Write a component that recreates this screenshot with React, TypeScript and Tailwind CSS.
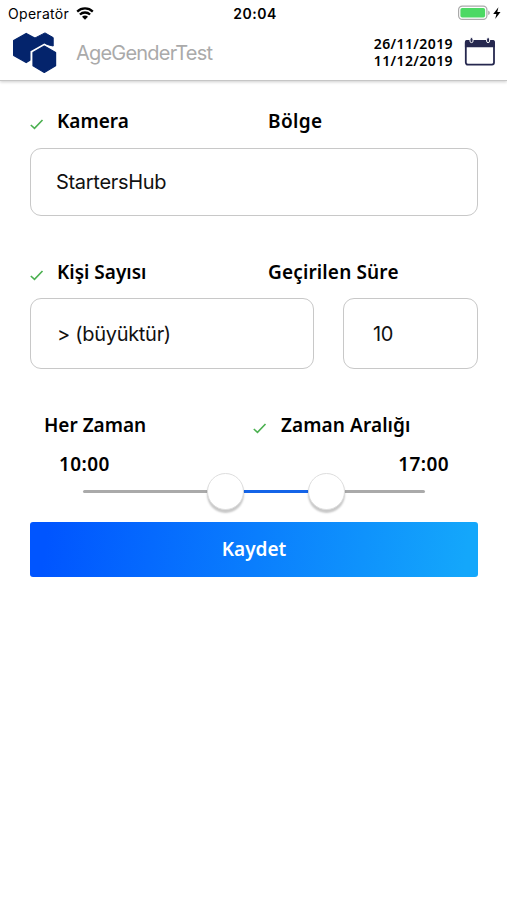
import type { ReactNode } from "react";
import clsx from "clsx";

const labelFont = "font-['Noto_Sans',sans-serif] font-semibold whitespace-nowrap text-black";

function StatusBar() {
  return (
    <div className="flex h-[27px] items-center pl-[8px] pr-[5px] text-black">
      <div className="flex flex-1 items-center">
        <span className="text-[14px] leading-[27px] tracking-[0.3px]">Operatör</span>
        <svg className="ml-[7px]" width="18" height="13" viewBox="0 0 18 13">
          <g fill="none" stroke="black" strokeWidth="2.3">
            <path d="M1.2 4.6C5.6 .4 12.4 .4 16.8 4.6" />
            <path d="M3.9 7.5C6.8 4.8 11.2 4.8 14.1 7.5" />
          </g>
          <path d="M6 9.7C7.7 8.2 10.3 8.2 12 9.7L9 12.7Z" />
        </svg>
      </div>
      <span className="text-[14px] font-semibold leading-[27px] tracking-[0.5px]">20:04</span>
      <div className="flex flex-1 items-center justify-end">
        <svg className="-mt-px" width="44" height="16" viewBox="0 0 44 16">
          <rect x=".6" y="1.1" width="28.3" height="13.3" rx="3.6" fill="white" stroke="#aaa" strokeWidth="1.2" />
          <rect x="2.4" y="2.9" width="24.7" height="9.7" rx="1.8" fill="#4cd964" />
          <path d="M30.3 5.4c1.9.8 1.9 3.9 0 4.7Z" fill="#999" />
          <path d="M40.4 2.2 35.2 8.9h3.2l-1.2 5 5.3-6.8h-3.2Z" />
        </svg>
      </div>
    </div>
  );
}

function Logo() {
  return (
    <svg className="-mt-px" width="46" height="42" viewBox="0 0 46 42" fill="#04246c">
      <path d="M33 .9 41.2 5.6V14L32.5 12 28 17 20 10V7.5Z" stroke="#04246c" strokeWidth="1" strokeLinejoin="round" />
      <path d="M14.2 1.5 26.4 8.2V22.8L14.2 30.5 1.7 23.3V8.5Z" stroke="#04246c" strokeWidth="1.4" strokeLinejoin="round" />
      <path
        d="M32.3 12.7 45 19.8V34.2L32.3 41.7 19.6 34.2V19.8Z"
        fill="white"
        stroke="white"
        strokeWidth="2.2"
      />
      <path d="M32.3 14 43.6 20.5V33.7L32.3 40.4 21 33.7V20.5Z" stroke="#04246c" strokeWidth="1.2" strokeLinejoin="round" />
    </svg>
  );
}

function CalendarIcon() {
  return (
    <svg className="-mt-[3px]" width="32" height="30" viewBox="0 0 32 30">
      <rect x="1.8" y="3.8" width="28.2" height="23.8" rx="2" fill="white" stroke="#26284f" strokeWidth="1.8" />
      <path d="M.9 10.2V4.9Q.9 2.9 2.9 2.9H28.9Q30.9 2.9 30.9 4.9V10.2Z" fill="#26284f" />
      <g fill="#26284f" stroke="white" strokeWidth="1">
        <rect x="6" y=".6" width="3" height="5" rx="1.5" />
        <rect x="22.6" y=".6" width="3" height="5" rx="1.5" />
      </g>
    </svg>
  );
}

function Check({ className }: { className?: string }) {
  return (
    <svg className={className} width="14" height="11" viewBox="0 0 14 11">
      <path d="M.8 6 4.5 9.3 12.5 1" fill="none" stroke="#4bb050" strokeWidth="1.6" />
    </svg>
  );
}

function Field({ className, children }: { className?: string; children: ReactNode }) {
  return (
    <div
      className={clsx(
        "flex items-center rounded-[11px] border border-[#c8c8c8] text-[20px] tracking-[-0.3px] text-[#111]",
        className,
      )}
    >
      {children}
    </div>
  );
}

function Thumb({ className }: { className: string }) {
  return (
    <div
      className={clsx(
        "absolute top-[-0.5px] size-[37px] rounded-full border border-[#dedede] bg-white shadow-[0_3px_2px_rgba(0,0,0,0.22)]",
        className,
      )}
    />
  );
}

export default function App() {
  return (
    <div className="min-h-screen overflow-hidden bg-white font-['Inter',sans-serif]">
      <header className="h-[81px] border-b border-[#c6c6c6] shadow-[0_1px_3px_rgba(0,0,0,0.2)]">
        <StatusBar />
        <div className="flex h-[53px] items-center pl-[12px] pr-[11px]">
          <Logo />
          <h1 className="-mt-[2px] ml-[18px] text-[20px] font-normal tracking-[-0.8px] text-[#aaa]">AgeGenderTest</h1>
          <div className={clsx(labelFont, "-mt-[3px] ml-auto text-[14px] leading-[17px] tracking-[0.4px]")}>
            <div>26/11/2019</div>
            <div>11/12/2019</div>
          </div>
          <div className="ml-[11px]">
            <CalendarIcon />
          </div>
        </div>
      </header>

      <main className="pr-[29px] pl-[30px]">
        <div className="mt-[27px] flex h-[26px] items-center">
          <Check className="mt-[6px]" />
          <span className={clsx(labelFont, "ml-[13px] w-[211px] text-[19px]")}>Kamera</span>
          <span className={clsx(labelFont, "text-[19px] tracking-[0.4px]")}>Bölge</span>
        </div>
        <Field className="mt-[14px] h-[68px] pl-[25px]">StartersHub</Field>

        <div className="mt-[43px] flex h-[26px] items-center">
          <Check className="mt-[6px]" />
          <span className={clsx(labelFont, "ml-[13px] w-[211px] text-[19px]")}>Kişi Sayısı</span>
          <span className={clsx(labelFont, "text-[19px] tracking-[0.15px]")}>Geçirilen Süre</span>
        </div>
        <div className="mt-[13px] flex gap-[29px]">
          <Field className="h-[71px] w-[284px] pl-[26px]">&gt; (büyüktür)</Field>
          <Field className="h-[71px] flex-1 pl-[29px]">10</Field>
        </div>

        <div className="mt-[43px] flex h-[26px] items-center pl-[14px]">
          <span className={clsx(labelFont, "w-[209px] text-[19px]")}>Her Zaman</span>
          <Check className="mt-[6px]" />
          <span className={clsx(labelFont, "ml-[14px] text-[19px] tracking-[0.1px]")}>Zaman Aralığı</span>
        </div>
        <div
          className={clsx(
            labelFont,
            "mt-[13px] flex h-[26px] items-center justify-between px-[29px] text-[19px] tracking-[0.4px]",
          )}
        >
          <span>10:00</span>
          <span>17:00</span>
        </div>
        <div className="relative mx-[53px] mt-[-4px] flex h-[37px] items-center">
          <div className="h-[2.5px] w-full rounded bg-[linear-gradient(90deg,#aaa_41%,#1464e8_41%,#1464e8_71%,#aaa_71%)]" />
          <Thumb className="left-[124px]" />
          <Thumb className="left-[225px]" />
        </div>
        <button className="mt-[12px] flex h-[55px] w-full items-center justify-center rounded-[3px] bg-[linear-gradient(98deg,#0055ff_4%,#14a7fb_97%)] font-['Noto_Sans',sans-serif] text-[19px] font-semibold text-white">
          Kaydet
        </button>
      </main>
    </div>
  );
}
